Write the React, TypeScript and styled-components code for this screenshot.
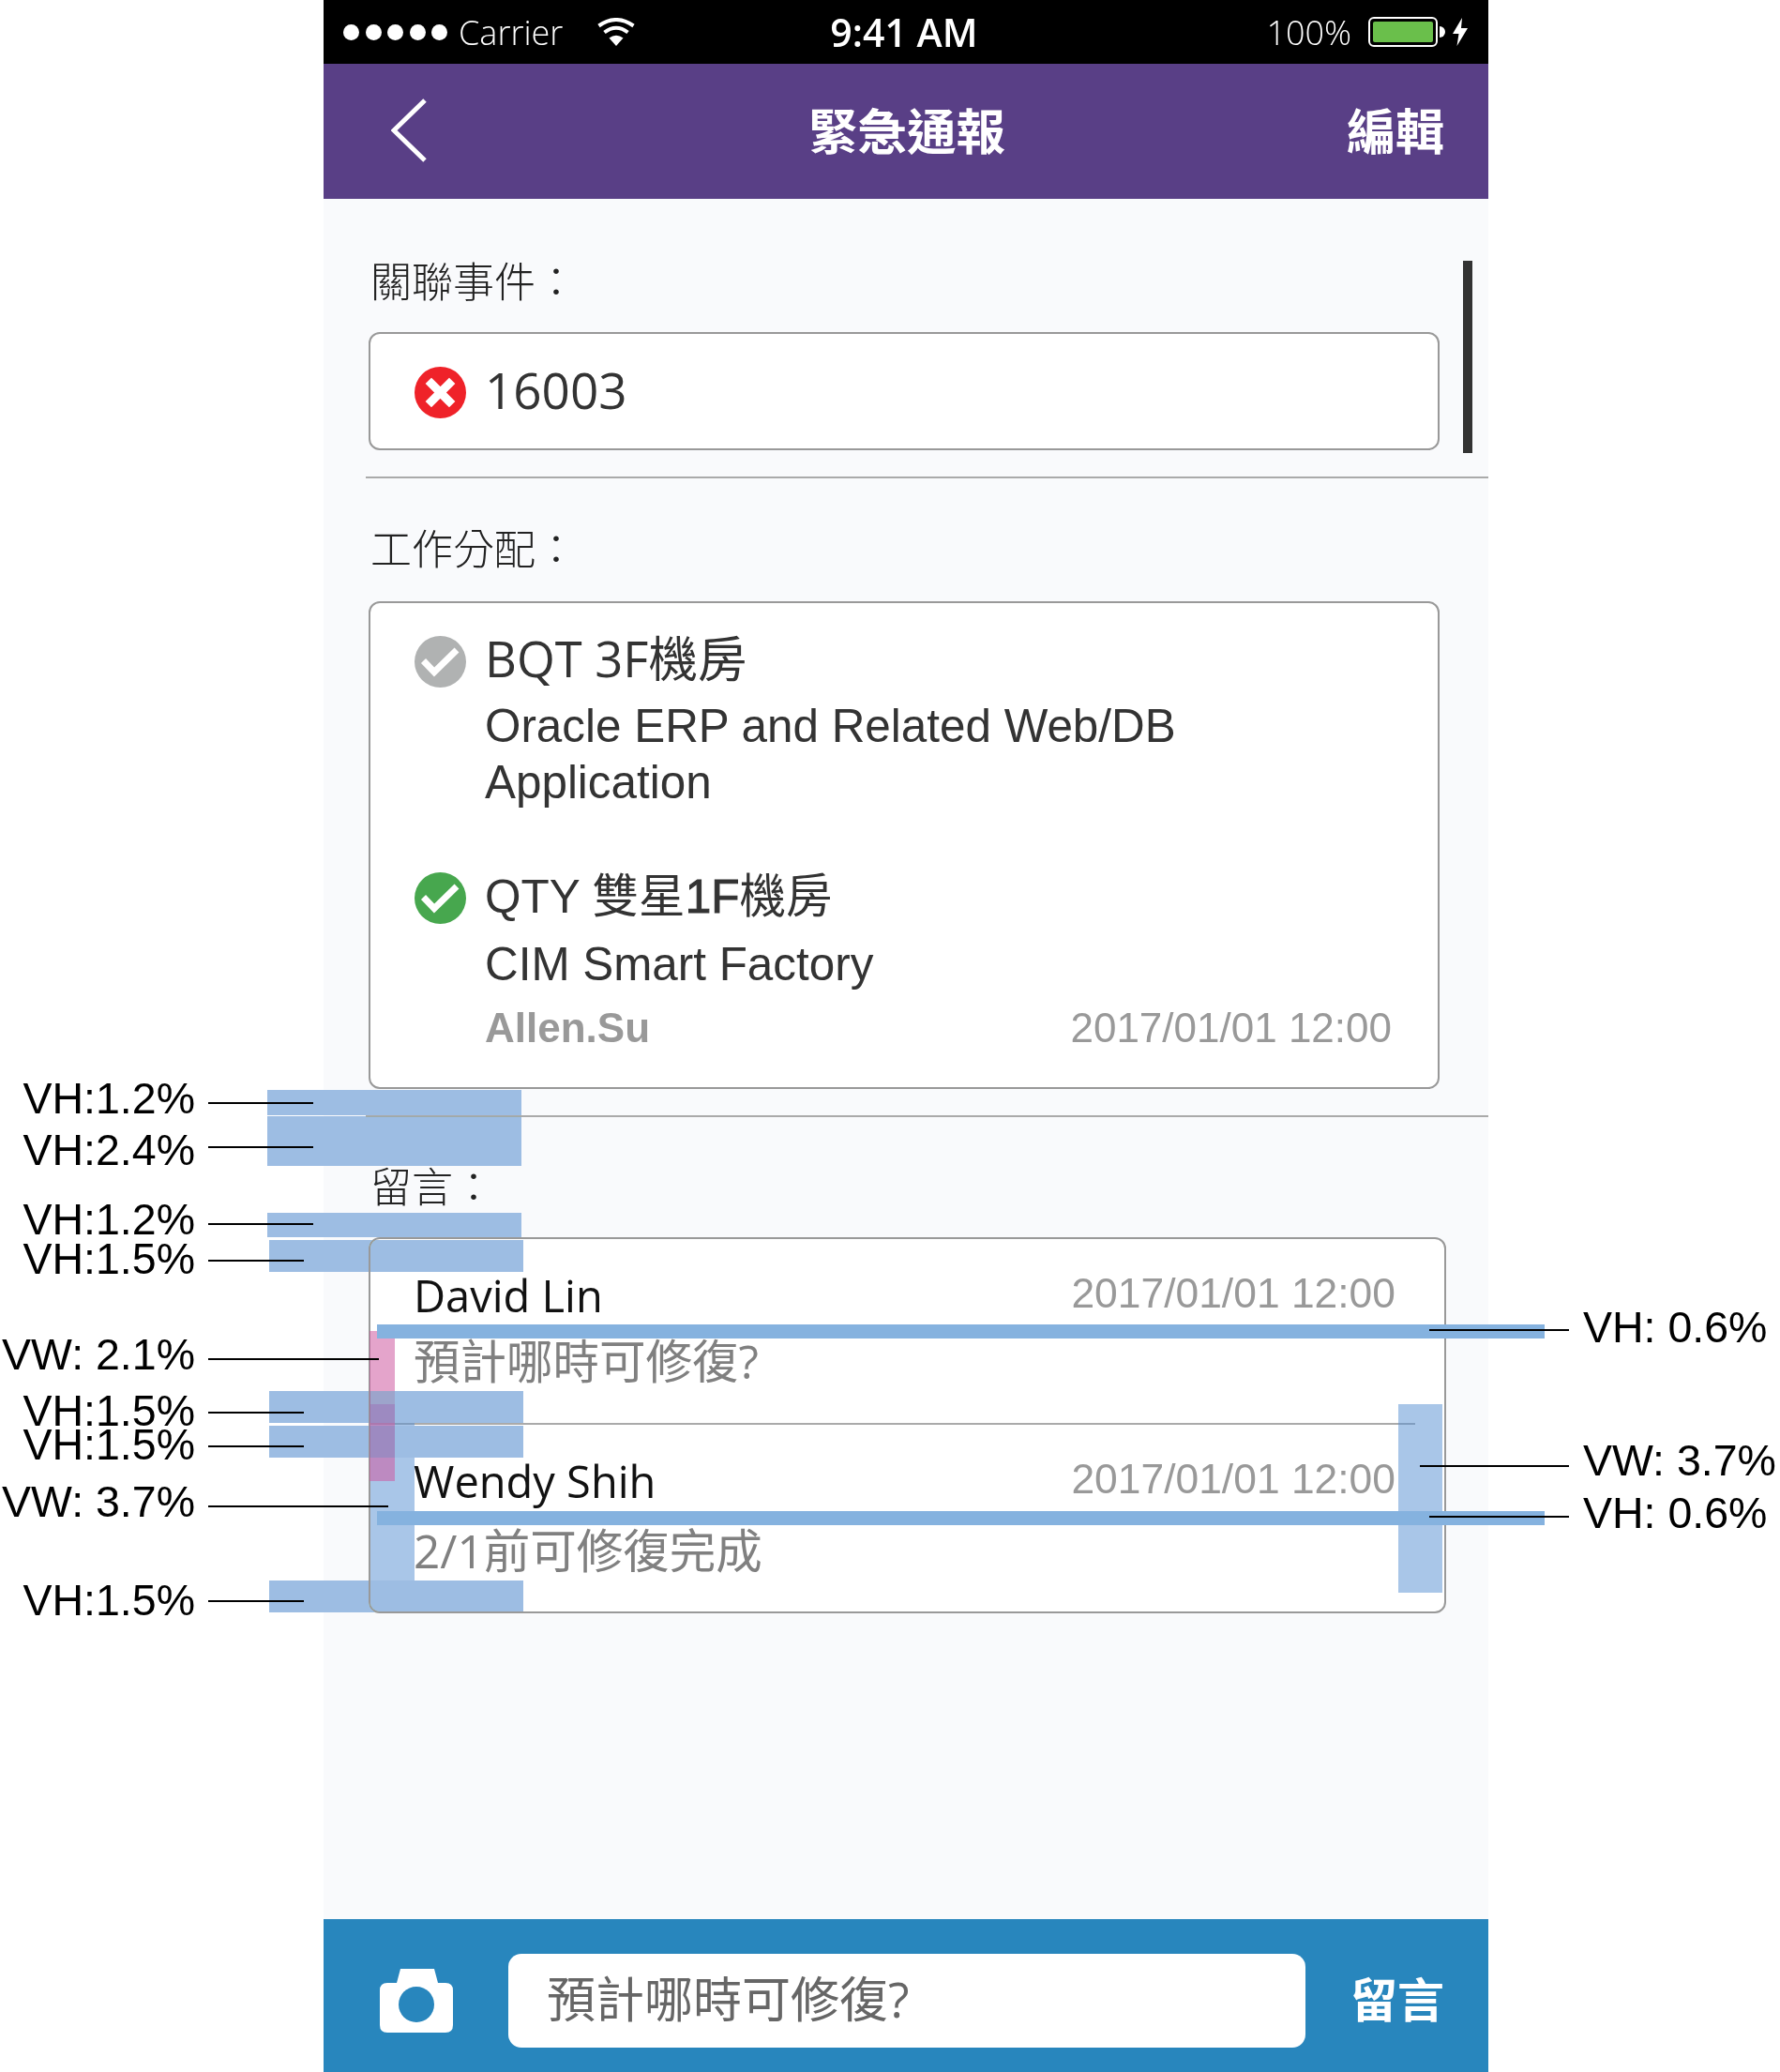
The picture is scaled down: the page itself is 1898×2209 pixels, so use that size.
import styled, { createGlobalStyle } from 'styled-components';

const SANS = `"Open Sans", "Noto Sans CJK TC", sans-serif`;
const ARIAL = `"Liberation Sans", "Noto Sans CJK TC", sans-serif`;

const GlobalStyle = createGlobalStyle`
  html, body {
    margin: 0;
    padding: 0;
    background: #fff;
  }
  * {
    box-sizing: border-box;
  }
`;

const ANNOTATION_RECTS = [
  { x: 285, y: 1162, w: 271, h: 27 },
  { x: 285, y: 1190, w: 271, h: 53 },
  { x: 285, y: 1293, w: 271, h: 26 },
  { x: 287, y: 1322, w: 271, h: 34 },
  { x: 287, y: 1483, w: 271, h: 34 },
  { x: 287, y: 1520, w: 271, h: 34 },
  { x: 287, y: 1685, w: 271, h: 34 },
];

const LEFT_NOTES = [
  { text: 'VH:1.2%', y: 1171, lineY: 1175, lineEnd: 334 },
  { text: 'VH:2.4%', y: 1226, lineY: 1222, lineEnd: 334 },
  { text: 'VH:1.2%', y: 1300, lineY: 1304, lineEnd: 334 },
  { text: 'VH:1.5%', y: 1342, lineY: 1343, lineEnd: 324 },
  { text: 'VW: 2.1%', y: 1444, lineY: 1448, lineEnd: 404 },
  { text: 'VH:1.5%', y: 1504, lineY: 1505, lineEnd: 324 },
  { text: 'VH:1.5%', y: 1540, lineY: 1541, lineEnd: 324 },
  { text: 'VW: 3.7%', y: 1601, lineY: 1605, lineEnd: 414 },
  { text: 'VH:1.5%', y: 1706, lineY: 1706, lineEnd: 324 },
];

const RIGHT_NOTES = [
  { text: 'VH: 0.6%', y: 1415, lineY: 1417, lineStart: 1524 },
  { text: 'VW: 3.7%', y: 1557, lineY: 1562, lineStart: 1514 },
  { text: 'VH: 0.6%', y: 1613, lineY: 1616, lineStart: 1524 },
];

const StatusIcon = ({ kind }: { kind: 'error' | 'pending' | 'done' }) => {
  const fill = kind === 'error' ? '#ef2229' : kind === 'pending' ? '#b0b2b2' : '#47a74e';
  return (
    <IconBox viewBox="0 0 55 55">
      <circle cx="27.5" cy="27.5" r="27.5" fill={fill} />
      {kind === 'error' ? (
        <path d="M18 18 L37 37 M37 18 L18 37" stroke="#fff" strokeWidth="9" strokeLinecap="square" />
      ) : (
        <path d="M9.5 26.5 L21 38.5 L45 15" stroke="#fff" strokeWidth="7" fill="none" />
      )}
    </IconBox>
  );
};

const App = () => (
  <Page>
    <GlobalStyle />
    <Phone>
      <StatusBar>
        <Dots>
          {[0, 1, 2, 3, 4].map((i) => (
            <Dot key={i} />
          ))}
        </Dots>
        <Carrier>Carrier</Carrier>
        <WifiIcon viewBox="0 0 40 30">
          <path d="M20 30 L12.5 21.5 Q20 16 27.5 21.5 Z" fill="#fff" />
          <path d="M7.5 15.5 Q20 6 32.5 15.5" stroke="#fff" strokeWidth="4" fill="none" />
          <path d="M1.5 8.5 Q20 -4.5 38.5 8.5" stroke="#fff" strokeWidth="4" fill="none" />
        </WifiIcon>
        <Clock>9:41 AM</Clock>
        <BatteryText>100%</BatteryText>
        <Battery>
          <BatteryFill />
        </Battery>
        <BatteryNub />
        <BoltIcon viewBox="0 0 16 30">
          <path d="M10 0 L0 17 H6.5 L4.5 30 L16 11 H9 Z" fill="#fff" />
        </BoltIcon>
      </StatusBar>
      <NavBar>
        <BackIcon viewBox="0 0 38 68">
          <path d="M36 2 L3 34 L36 66" stroke="#fff" strokeWidth="5" fill="none" />
        </BackIcon>
        <NavTitle>緊急通報</NavTitle>
        <NavAction>編輯</NavAction>
      </NavBar>
      <Body>
        <Section $top={61} $bottom={28}>
          <Scrollbar />
          <Label>關聯事件：</Label>
          <EventCard>
            <StatusIcon kind="error" />
            <EventNumber>16003</EventNumber>
          </EventCard>
        </Section>
        <Divider />
        <Section $top={48} $bottom={28} $labelGap={33}>
          <Label>工作分配：</Label>
          <AssignCard>
            <AssignRow>
              <StatusIcon kind="pending" />
              <AssignTitle>BQT 3F機房</AssignTitle>
            </AssignRow>
            <AssignDesc>Oracle ERP and Related Web/DB Application</AssignDesc>
            <AssignRow $gap>
              <StatusIcon kind="done" />
              <AssignTitle $arial>
                QTY 雙星<Heavy>1F</Heavy>機房
              </AssignTitle>
            </AssignRow>
            <AssignDesc $top={11}>CIM Smart Factory</AssignDesc>
            <AssignFooter>
              <Author>Allen.Su</Author>
              <DateText>2017/01/01 12:00</DateText>
            </AssignFooter>
          </AssignCard>
        </Section>
        <Divider />
        <Section $top={47} $bottom={0}>
          <Label>留言：</Label>
          <CommentCard>
            <Comment $top={35} $bottom={41}>
              <CommentHead>
                <CommentName>David Lin</CommentName>
                <CommentDate>2017/01/01 12:00</CommentDate>
              </CommentHead>
              <CommentText $top={20}>預計哪時可修復?</CommentText>
            </Comment>
            <CommentDivider />
            <Comment $top={35} $bottom={40}>
              <CommentHead>
                <CommentName>Wendy Shih</CommentName>
                <CommentDate>2017/01/01 12:00</CommentDate>
              </CommentHead>
              <CommentText $top={24}>2/1前可修復完成</CommentText>
            </Comment>
          </CommentCard>
        </Section>
      </Body>
      <Footer>
        <CameraIcon viewBox="0 0 78 68">
          <path d="M8 15 H18 L22 0 H58 L62 15 H70 Q78 15 78 23 V60 Q78 68 70 68 H8 Q0 68 0 60 V23 Q0 15 8 15 Z" fill="#fff" />
          <circle cx="39" cy="38" r="19" fill="#2886bd" />
        </CameraIcon>
        <MessageInput>
          <Placeholder>預計哪時可修復?</Placeholder>
        </MessageInput>
        <SendButton>留言</SendButton>
      </Footer>
    </Phone>

    <NoteColumn $x={395} />
    <NoteColumn $x={1491} />
    <PinkRect />
    {ANNOTATION_RECTS.map((r) => (
      <NoteRect key={`${r.x}-${r.y}`} $x={r.x} $y={r.y} $w={r.w} $h={r.h} />
    ))}
    <NoteBar $y={1412} />
    <NoteBar $y={1611} />
    {LEFT_NOTES.map((n) => (
      <div key={`${n.text}-${n.y}`}>
        <LeftNote $y={n.y}>{n.text}</LeftNote>
        <LeaderLine $x={222} $y={n.lineY} $w={n.lineEnd - 222} />
      </div>
    ))}
    {RIGHT_NOTES.map((n) => (
      <div key={`${n.text}-${n.y}`}>
        <RightNote $y={n.y}>{n.text}</RightNote>
        <LeaderLine $x={n.lineStart} $y={n.lineY} $w={1673 - n.lineStart} />
      </div>
    ))}
  </Page>
);

const Page = styled.div`
  position: relative;
  width: 1898px;
  height: 2209px;
  overflow: hidden;
  background: #fff;
`;

const Phone = styled.div`
  display: flex;
  flex-direction: column;
  width: 1242px;
  height: 2209px;
  margin-left: 345px;
  background: #f9fafc;
`;

const StatusBar = styled.div`
  display: flex;
  align-items: center;
  flex: none;
  height: 68px;
  padding-left: 21px;
  background: #000;
  color: #fff;
  font-family: ${SANS};
`;

const Dots = styled.div`
  display: flex;
  gap: 6.5px;
`;

const Dot = styled.span`
  width: 17px;
  height: 17px;
  border-radius: 50%;
  background: #fff;
`;

const Carrier = styled.span`
  margin-left: 12px;
  font-size: 36px;
  font-weight: 300;
`;

const WifiIcon = styled.svg`
  width: 40px;
  height: 30px;
  margin-left: 37px;
`;

const Clock = styled.span`
  margin-left: 208px;
  font-size: 41px;
  font-weight: 600;
`;

const BatteryText = styled.span`
  margin-left: 308px;
  font-size: 36px;
  font-weight: 300;
`;

const Battery = styled.div`
  width: 74px;
  height: 32px;
  margin-left: 18px;
  padding: 3px;
  border: 2px solid #fff;
  border-radius: 6px;
`;

const BatteryFill = styled.div`
  height: 100%;
  border-radius: 2px;
  background: #6abf4b;
`;

const BatteryNub = styled.span`
  width: 6px;
  height: 12px;
  margin-left: 2px;
  border-radius: 0 6px 6px 0;
  background: #fff;
`;

const BoltIcon = styled.svg`
  width: 16px;
  height: 30px;
  margin-left: 8px;
`;

const NavBar = styled.div`
  display: flex;
  align-items: center;
  flex: none;
  height: 144px;
  padding: 0 47px 0 72px;
  background: #593f86;
  color: #fff;
  font-family: ${SANS};
  font-size: 52px;
  font-weight: 700;
`;

const BackIcon = styled.svg`
  width: 38px;
  height: 68px;
  margin-bottom: 2px;
`;

const NavTitle = styled.span`
  margin-left: 407px;
  font-size: 52.5px;
  line-height: 1;
`;

const NavAction = styled.span`
  margin-left: auto;
  line-height: 1;
`;

const Body = styled.div`
  flex: 1;
`;

const Label = styled.div`
  margin: 0 0 31px 2px;
  font-family: "Noto Sans CJK TC", sans-serif;
  font-size: 44px;
  font-weight: 300;
  line-height: 50px;
  color: #222;
`;

const Section = styled.section<{ $top: number; $bottom: number; $labelGap?: number }>`
  position: relative;
  padding: ${({ $top }) => $top}px 52px ${({ $bottom }) => $bottom}px 48px;

  ${Label} {
    margin-bottom: ${({ $labelGap }) => $labelGap ?? 31}px;
  }
`;

const Scrollbar = styled.div`
  position: absolute;
  top: 66px;
  right: 17px;
  width: 10px;
  height: 205px;
  background: #333;
`;

const Divider = styled.div`
  height: 2px;
  margin-left: 45px;
  background: #aaa;
`;

const CardBase = styled.div`
  border: 2px solid #999;
  border-radius: 12px;
  background: #fff;
`;

const EventCard = styled(CardBase)`
  display: flex;
  align-items: center;
  gap: 20px;
  height: 126px;
  padding: 2px 0 0 47px;
`;

const EventNumber = styled.span`
  margin: 0 0 6px 0;
  font-family: ${SANS};
  font-size: 53px;
  color: #333;
`;

const IconBox = styled.svg`
  flex: none;
  width: 55px;
  height: 55px;
`;

const AssignCard = styled(CardBase)`
  height: 520px;
  padding: 32px 49px 0 47px;
`;

const AssignRow = styled.div<{ $gap?: boolean }>`
  display: flex;
  align-items: center;
  gap: 20px;
  height: 60px;
  margin-top: ${({ $gap }) => ($gap ? 63 : 0)}px;
`;

const AssignTitle = styled.span<{ $arial?: boolean }>`
  margin-bottom: 12px;
  font-family: ${({ $arial }) => ($arial ? ARIAL : SANS)};
  font-size: ${({ $arial }) => ($arial ? 49.5 : 52.5)}px;
  color: #333;
`;

const Heavy = styled.span`
  -webkit-text-stroke: 1px #333;
`;

const AssignDesc = styled.div<{ $top?: number }>`
  max-width: 850px;
  margin: ${({ $top }) => $top ?? 9}px 0 0 75px;
  font-family: ${ARIAL};
  font-size: 49.4px;
  line-height: 60px;
  color: #333;
`;

const AssignFooter = styled.div`
  display: flex;
  align-items: center;
  justify-content: space-between;
  height: 60px;
  margin: 8px 0 0 75px;
`;

const Author = styled.span`
  font-family: ${ARIAL};
  font-size: 44px;
  font-weight: 700;
  color: #999;
`;

const DateText = styled.span`
  font-family: ${ARIAL};
  font-size: 44px;
  color: #999;
`;

const CommentDate = styled(DateText)`
  margin-bottom: 5px;
  font-size: 44.4px;
`;

const CommentCard = styled(CardBase)`
  width: 1149px;
`;

const Comment = styled.div<{ $top: number; $bottom: number }>`
  padding: ${({ $top }) => $top}px 52px ${({ $bottom }) => $bottom}px 46px;
`;

const CommentHead = styled.div`
  display: flex;
  align-items: center;
  justify-content: space-between;
  height: 50px;
`;

const CommentName = styled.span`
  font-family: ${SANS};
  font-size: 47px;
  color: #111;
`;

const CommentText = styled.div<{ $top: number }>`
  margin-top: ${({ $top }) => $top}px;
  font-family: ${SANS};
  font-size: 49.5px;
  line-height: 50px;
  color: #808080;
`;

const CommentDivider = styled.div`
  height: 2px;
  margin-right: 31px;
  background: #aaa;
`;

const Footer = styled.div`
  display: flex;
  align-items: center;
  flex: none;
  height: 163px;
  padding: 11px 0 0 60px;
  background: #2886bd;
`;

const CameraIcon = styled.svg`
  flex: none;
  width: 78px;
  height: 68px;
`;

const MessageInput = styled.div`
  display: flex;
  align-items: center;
  width: 850px;
  height: 100px;
  margin-left: 59px;
  padding-left: 41px;
  border-radius: 14px;
  background: #fff;
`;

const Placeholder = styled.span`
  margin-bottom: 10px;
  font-family: ${SANS};
  font-size: 52px;
  color: #666;
`;

const SendButton = styled.span`
  margin: 0 0 8px 48px;
  font-family: ${SANS};
  font-size: 50px;
  font-weight: 700;
  color: #fff;
`;

const PinkRect = styled.div`
  position: absolute;
  left: 394px;
  top: 1419px;
  width: 27px;
  height: 160px;
  background: rgba(205, 90, 160, 0.55);
`;

const NoteRect = styled.div<{ $x: number; $y: number; $w: number; $h: number }>`
  position: absolute;
  left: ${({ $x }) => $x}px;
  top: ${({ $y }) => $y}px;
  width: ${({ $w }) => $w}px;
  height: ${({ $h }) => $h}px;
  background: #9dbde3;
  mix-blend-mode: darken;
`;

const NoteColumn = styled.div<{ $x: number }>`
  position: absolute;
  left: ${({ $x }) => $x}px;
  top: 1497px;
  width: 47px;
  height: 201px;
  background: rgba(90, 145, 210, 0.52);
`;

const NoteBar = styled.div<{ $y: number }>`
  position: absolute;
  left: 402px;
  top: ${({ $y }) => $y}px;
  width: 1245px;
  height: 15px;
  background: #85b2df;
`;

const NoteLabel = styled.div<{ $y: number }>`
  position: absolute;
  top: ${({ $y }) => $y - 18}px;
  font-family: ${ARIAL};
  font-size: 46.5px;
  line-height: 36px;
  white-space: nowrap;
  color: #000;
`;

const LeftNote = styled(NoteLabel)`
  right: 1690px;
`;

const RightNote = styled(NoteLabel)`
  left: 1688px;
`;

const LeaderLine = styled.div<{ $x: number; $y: number; $w: number }>`
  position: absolute;
  left: ${({ $x }) => $x}px;
  top: ${({ $y }) => $y}px;
  width: ${({ $w }) => $w}px;
  height: 2px;
  background: #000;
`;

export default App;
